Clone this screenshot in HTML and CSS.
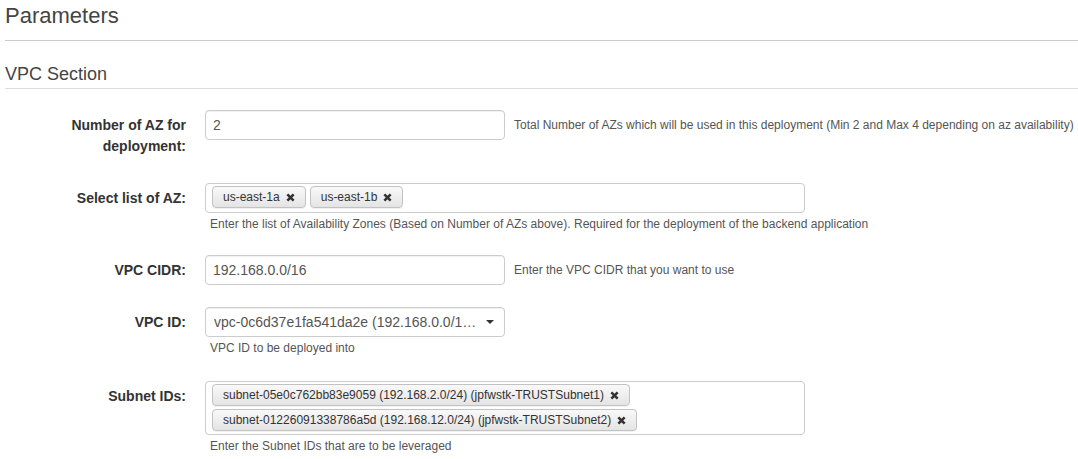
FILE: index.html
```html
<!DOCTYPE html>
<html lang="en">
<head>
<meta charset="utf-8">
<title>Parameters</title>
<link rel="stylesheet" href="styles.css">
</head>
<body>
<div class="page">
  <h1 class="title">Parameters</h1>
  <h2 class="section">VPC Section</h2>
  <div class="form">
    <div class="row">
      <label class="label">Number of AZ for<br>deployment:</label>
      <div class="field-inline">
        <div class="input">2</div>
        <span class="help-inline">Total Number of AZs which will be used in this deployment (Min 2 and Max 4 depending on az availability)</span>
      </div>
    </div>
    <div class="row">
      <label class="label">Select list of AZ:</label>
      <div class="field">
        <div class="tags">
          <span class="tag">us-east-1a<svg class="tag-x" viewBox="0 0 8 8"><path d="M1.2 1.2L6.8 6.8M6.8 1.2L1.2 6.8"/></svg></span>
          <span class="tag">us-east-1b<svg class="tag-x" viewBox="0 0 8 8"><path d="M1.2 1.2L6.8 6.8M6.8 1.2L1.2 6.8"/></svg></span>
        </div>
        <div class="help">Enter the list of Availability Zones (Based on Number of AZs above). Required for the deployment of the backend application</div>
      </div>
    </div>
    <div class="row">
      <label class="label">VPC CIDR:</label>
      <div class="field-inline">
        <div class="input">192.168.0.0/16</div>
        <span class="help-inline">Enter the VPC CIDR that you want to use</span>
      </div>
    </div>
    <div class="row">
      <label class="label">VPC ID:</label>
      <div class="field">
        <div class="select">
          <span class="select-text">vpc-0c6d37e1fa541da2e (192.168.0.0/16) (jpfwstk-VPC)</span>
          <span class="caret"></span>
        </div>
        <div class="help">VPC ID to be deployed into</div>
      </div>
    </div>
    <div class="row row-last">
      <label class="label">Subnet IDs:</label>
      <div class="field">
        <div class="tags">
          <span class="tag">subnet-05e0c762bb83e9059 (192.168.2.0/24) (jpfwstk-TRUSTSubnet1)<svg class="tag-x" viewBox="0 0 8 8"><path d="M1.2 1.2L6.8 6.8M6.8 1.2L1.2 6.8"/></svg></span>
          <span class="tag">subnet-01226091338786a5d (192.168.12.0/24) (jpfwstk-TRUSTSubnet2)<svg class="tag-x" viewBox="0 0 8 8"><path d="M1.2 1.2L6.8 6.8M6.8 1.2L1.2 6.8"/></svg></span>
        </div>
        <div class="help">Enter the Subnet IDs that are to be leveraged</div>
      </div>
    </div>
  </div>
</div>
</body>
</html>
```
FILE: styles.css
```css
body {
  margin: 0;
  font-family: "Liberation Sans", Arial, sans-serif;
  color: #333;
  background: #fff;
}
.page {
  padding-left: 5px;
}
.title {
  margin: 0;
  padding: 3px 0 11px;
  font-size: 22px;
  line-height: 26px;
  font-weight: normal;
  color: #444;
  border-bottom: 1px solid #ccc;
}
.section {
  margin: 22px 0 0;
  padding: 0 0 3px;
  font-size: 18px;
  line-height: 22px;
  font-weight: normal;
  color: #444;
  border-bottom: 1px solid #ddd;
}
.form {
  display: flex;
  flex-direction: column;
  gap: 22px;
  padding-top: 21px;
}
.row {
  display: grid;
  grid-template-columns: 181px 1fr;
  column-gap: 19px;
  align-items: start;
}
.row-last {
  margin-top: 2px;
}
.label {
  text-align: right;
  font-weight: bold;
  font-size: 14px;
  line-height: 21px;
  padding: 5px 0 4px;
  color: #333;
}
.field-inline {
  display: flex;
  align-items: center;
  gap: 9px;
}
.input,
.select {
  box-sizing: border-box;
  width: 300px;
  height: 30px;
  border: 1px solid #ccc;
  border-radius: 4px;
  background: #fff;
  box-shadow: inset 0 1px 1px rgba(0, 0, 0, 0.06);
  font-size: 14px;
  color: #555;
}
.input {
  padding: 0 7px;
  line-height: 28px;
}
.select {
  display: flex;
  align-items: center;
  gap: 4px;
  padding: 0 10px 0 8px;
}
.select-text {
  flex: 1;
  min-width: 0;
  overflow: hidden;
  white-space: nowrap;
  text-overflow: ellipsis;
}
.caret {
  width: 0;
  height: 0;
  border-left: 4px solid transparent;
  border-right: 4px solid transparent;
  border-top: 4px solid #333;
}
.help-inline {
  font-size: 12px;
  color: #555;
  white-space: nowrap;
}
.help {
  margin: 3px 0 0 5px;
  font-size: 12px;
  line-height: 17px;
  color: #555;
}
.tags {
  box-sizing: border-box;
  width: 600px;
  min-height: 30px;
  border: 1px solid #ccc;
  border-radius: 4px;
  background: #fff;
  padding: 2px 6px 3px;
  display: flex;
  flex-wrap: wrap;
  align-content: flex-start;
  gap: 3px 4px;
}
.tag {
  box-sizing: border-box;
  display: inline-flex;
  align-items: center;
  height: 22px;
  padding: 0 10px;
  border: 1px solid #c2c2c2;
  border-radius: 4px;
  background: linear-gradient(#f9f9f9, #e4e4e4);
  box-shadow: 0 1px 0 rgba(0, 0, 0, 0.05);
  font-size: 12px;
  color: #333;
  white-space: nowrap;
}
.tag-x {
  width: 9px;
  height: 9px;
  margin-left: 6px;
  fill: none;
  stroke: #333;
  stroke-width: 2.3;
}
```
